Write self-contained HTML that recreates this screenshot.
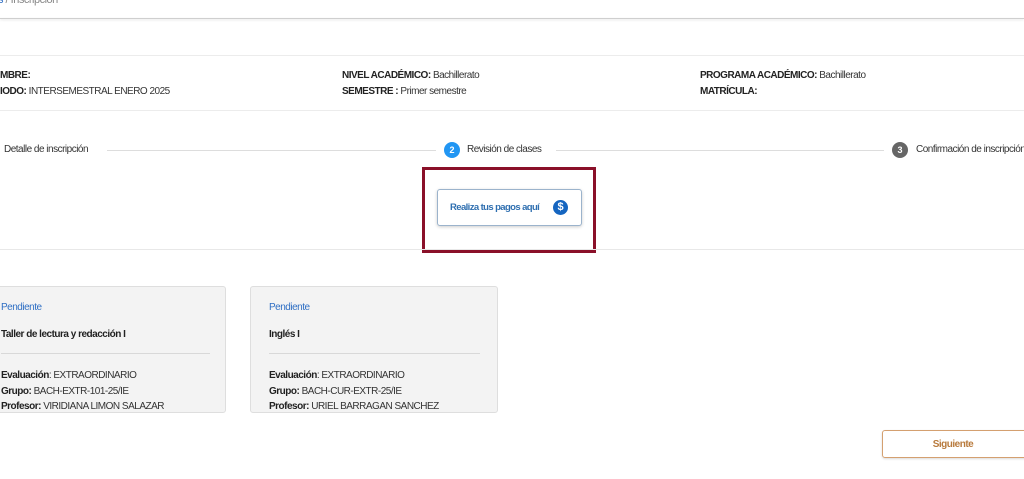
<!DOCTYPE html>
<html><head><meta charset="utf-8"><style>
*{margin:0;padding:0;box-sizing:border-box}
body{width:1024px;height:479px;overflow:hidden;background:#fff;font-family:"Liberation Sans Narrow","Liberation Sans",sans-serif;font-size:10px;letter-spacing:-0.5px;color:#333;position:relative}
.a{position:absolute;white-space:nowrap}
b{color:#222}
.hl{position:absolute;left:0;width:1024px;height:1px;background:#e6e6e6}
.circ{position:absolute;width:16px;height:16px;border-radius:50%;color:#fff;font-size:9px;font-weight:bold;text-align:center;line-height:16px;letter-spacing:0}
.card{position:absolute;top:286px;height:127px;background:#f3f3f3;border:1px solid #dedede;border-radius:3px}
.card .p{position:absolute;color:#2f6fc4;font-size:10px}
.card .t{position:absolute;font-weight:bold;color:#222}
.card .d{position:absolute;line-height:15.5px}
.card hr{position:absolute;border:0;height:1px;background:#d8d8d8}
</style></head><body>
<div class="a" style="left:-2px;top:-6px;font-size:11px;color:#888"><span style="color:#2f6fc4">s</span> / Inscripción</div>
<div class="hl" style="top:18px;background:#cfcfcf;box-shadow:0 1px 2px #ddd"></div>
<div class="hl" style="top:55px;background:#ececec"></div>
<div class="a" style="left:0;top:70px"><b>MBRE:</b></div>
<div class="a" style="left:0;top:86px"><b>IODO:</b> INTERSEMESTRAL ENERO 2025</div>
<div class="a" style="left:342px;top:70px"><b>NIVEL ACADÉMICO:</b> Bachillerato</div>
<div class="a" style="left:342px;top:86px"><b>SEMESTRE :</b> Primer semestre</div>
<div class="a" style="left:700px;top:70px"><b>PROGRAMA ACADÉMICO:</b> Bachillerato</div>
<div class="a" style="left:700px;top:86px"><b>MATRÍCULA:</b></div>
<div class="hl" style="top:110px;background:#ececec"></div>
<div class="a" style="left:4px;top:144px;color:#333">Detalle de inscripción</div>
<div class="a" style="left:107px;top:150px;width:329px;height:1px;background:#ddd"></div>
<div class="circ" style="left:444px;top:142px;background:#2196f3">2</div>
<div class="a" style="left:467px;top:144px">Revisión de clases</div>
<div class="a" style="left:556px;top:150px;width:328px;height:1px;background:#ddd"></div>
<div class="circ" style="left:892px;top:142px;background:#666">3</div>
<div class="a" style="left:916px;top:144px">Confirmación de inscripción</div>
<div class="a" style="left:422px;top:167px;width:174px;height:86px;border:3px solid #8a1029"></div>
<div class="a" style="left:437px;top:189px;width:145px;height:37px;border:1px solid #9bb3cc;border-radius:3px;box-shadow:0 1px 3px rgba(0,0,0,.2);background:#fff"></div>
<div class="a" style="left:450px;top:202px;color:#2f6fb0;font-weight:bold;font-size:9.5px;letter-spacing:-0.6px">Realiza tus pagos aquí</div>
<div class="circ" style="left:553px;top:200px;width:15px;height:15px;line-height:15px;background:#1565c0;font-size:11px">$</div>
<div class="hl" style="top:249px;background:#e8e8e8"></div>
<div class="card" style="left:-5px;width:231px">
 <div class="p" style="left:5px;top:15px">Pendiente</div>
 <div class="t" style="left:5px;top:42px">Taller de lectura y redacción I</div>
 <hr style="left:5px;top:66px;width:209px">
 <div class="d" style="left:5px;top:81px"><b>Evaluación</b>: EXTRAORDINARIO<br><b>Grupo:</b> BACH-EXTR-101-25/IE<br><b>Profesor:</b> VIRIDIANA LIMON SALAZAR</div>
</div>
<div class="card" style="left:250px;width:248px">
 <div class="p" style="left:18px;top:15px">Pendiente</div>
 <div class="t" style="left:18px;top:42px">Inglés I</div>
 <hr style="left:18px;top:66px;width:211px">
 <div class="d" style="left:18px;top:81px"><b>Evaluación</b>: EXTRAORDINARIO<br><b>Grupo:</b> BACH-CUR-EXTR-25/IE<br><b>Profesor:</b> URIEL BARRAGAN SANCHEZ</div>
</div>
<div class="a" style="left:882px;top:430px;width:150px;height:28px;border:1px solid #d4a070;border-radius:3px;box-shadow:0 1px 2px rgba(0,0,0,.15);text-align:center;line-height:27px;color:#b87a3c;font-weight:bold;padding-right:8px">Siguiente</div>
</body></html>
